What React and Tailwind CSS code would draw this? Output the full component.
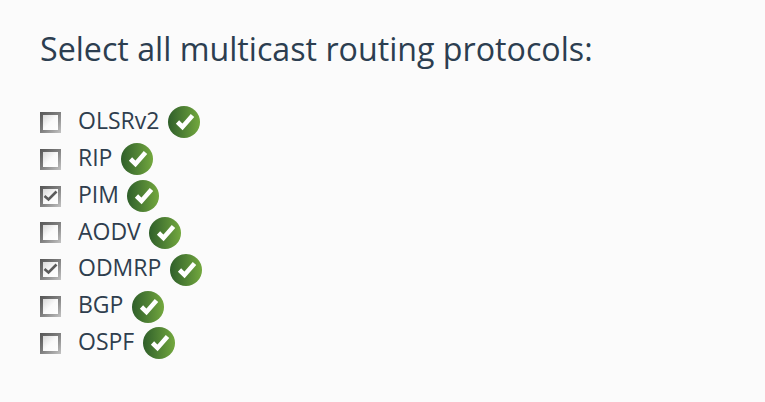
const options = [
  { label: 'OLSRv2', checked: false },
  { label: 'RIP', checked: false },
  { label: 'PIM', checked: true },
  { label: 'AODV', checked: false },
  { label: 'ODMRP', checked: true },
  { label: 'BGP', checked: false },
  { label: 'OSPF', checked: false },
]

const Box = ({ checked }) => (
  <span className="w-[21px] h-[21px] shrink-0 p-[3px] bg-gradient-to-br from-[#555555] via-[#808080] to-[#c4c4c4]">
    <span className="block w-full h-full bg-gradient-to-br from-[#d8d8d8] via-[#fafafa] to-white">
      {checked && (
        <svg viewBox="0 0 15 15" className="w-full h-full">
          <path d="M1.5 7 L5.5 10.5 L13.5 2.5" fill="none" stroke="#5c5c5c" strokeWidth="2.6" />
        </svg>
      )}
    </span>
  </span>
)

const Tick = () => (
  <span className="w-8 h-8 rounded-full shrink-0 flex items-center justify-center bg-gradient-to-r from-[#2f5f2a] to-[#73a83e]">
    <svg viewBox="0 0 32 32" className="w-8 h-8">
      <path d="M9.5 16 L14.5 21 L24.5 9.5" fill="none" stroke="#fff" strokeWidth="4.6" />
    </svg>
  </span>
)

export default function App() {
  return (
    <div className="w-[765px] h-[402px] bg-[#fbfbfb] pt-[26px] pl-10 overflow-hidden font-['Open_Sans',sans-serif]">
      <h1 className="text-[32.2px] leading-[46px] text-[#2c3e50]">Select all multicast routing protocols:</h1>
      <ul className="mt-[32px] flex flex-col">
        {options.map((o) => (
          <li key={o.label} className="flex items-center h-[36.83px]">
            <Box checked={o.checked} />
            <span className="ml-[17px] pb-1 text-[23px] text-[#2f3e4e]">{o.label}</span>
            <span className="ml-[8.5px]"><Tick /></span>
          </li>
        ))}
      </ul>
    </div>
  )
}
